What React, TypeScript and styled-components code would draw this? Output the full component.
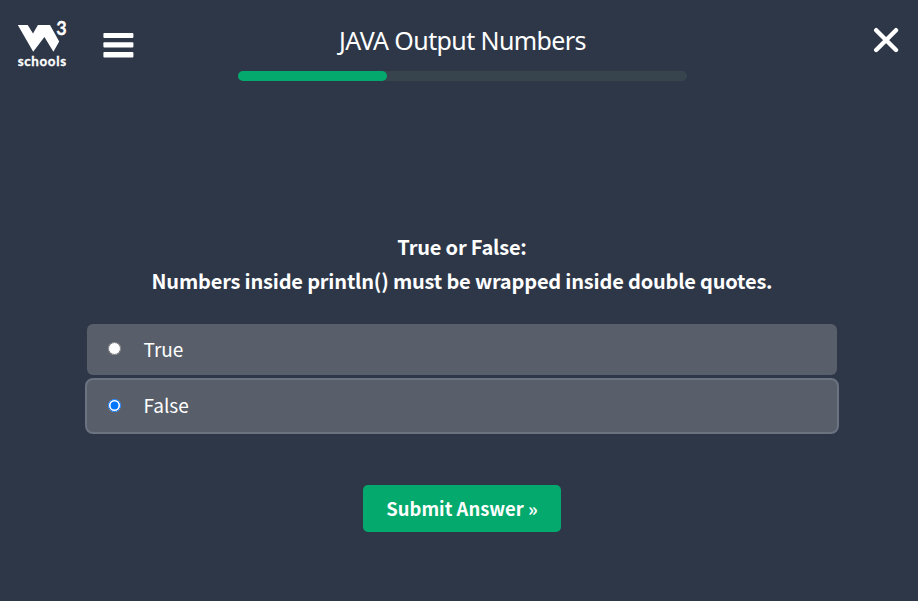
import React, { useState } from "react";
import styled, { createGlobalStyle } from "styled-components";

const GlobalStyle = createGlobalStyle`
  * { box-sizing: border-box; }
  body {
    margin: 0;
    background: #2d3748;
    color: #fff;
    font-family: "Noto Sans CJK SC", "Noto Sans", sans-serif;
  }
`;

const Page = styled.div`
  width: 918px;
  height: 601px;
  display: flex;
  flex-direction: column;
  overflow: hidden;
`;

const Header = styled.header`
  height: 90px;
  display: grid;
  grid-template-columns: 238px 449px 1fr;
`;

const Brand = styled.div`
  display: flex;
  align-items: flex-start;
  padding: 16px 0 0 14px;
`;

const Logo = styled.svg`
  display: block;
  width: 58px;
  height: 56px;
  fill: #fff;
  font-family: Lato, sans-serif;
  font-weight: 700;
`;

const MenuButton = styled.button`
  display: flex;
  margin: 17px 0 0 31px;
  padding: 0;
  border: 0;
  background: none;
`;

const Progress = styled.div`
  display: flex;
  flex-direction: column;
  align-items: center;
`;

const Title = styled.h1`
  margin: 0;
  padding-top: 22px;
  height: 71px;
  font: 400 25px/36px "Noto Sans", sans-serif;
  letter-spacing: -0.6px;
  white-space: nowrap;
`;

const Track = styled.div`
  width: 449px;
  height: 10px;
  border-radius: 5px;
  background: #38444d;
`;

const Fill = styled.div<{ $width: number }>`
  width: ${(p) => p.$width}px;
  height: 10px;
  border-radius: 5px;
  background: #04aa6d;
`;

const CloseButton = styled.button`
  justify-self: end;
  align-self: start;
  margin: 27px 19px 0 0;
  padding: 0;
  border: 0;
  background: none;
  display: flex;
`;

const Quiz = styled.form`
  width: 754px;
  margin: 140px 0 0 85px;
  display: flex;
  flex-direction: column;
  align-items: center;
`;

const Question = styled.p`
  margin: 0;
  height: 94px;
  text-align: center;
  white-space: nowrap;
  font-size: 20px;
  font-weight: 700;
  line-height: 34px;
  letter-spacing: -0.19px;
`;

const Option = styled.label<{ $selected: boolean }>`
  width: ${(p) => (p.$selected ? 754 : 750)}px;
  height: ${(p) => (p.$selected ? 56 : 51)}px;
  margin-bottom: 3px;
  padding-left: 21px;
  display: flex;
  align-items: center;
  border-radius: ${(p) => (p.$selected ? 8 : 6)}px;
  border: ${(p) => (p.$selected ? "2px solid #6b7280" : "0")};
  background: #585f6b;
  font-size: 19px;
  line-height: 28px;
`;

const Radio = styled.input`
  width: 13px;
  height: 13px;
  margin: 0 22.5px 2px 0;
`;

const OptionText = styled.span`
  padding-bottom: 2px;
`;

const Submit = styled.button`
  width: 198px;
  height: 47px;
  margin-top: 48px;
  padding: 0 0 2px;
  border: 0;
  border-radius: 5px;
  background: #04aa6d;
  color: #fff;
  font: 700 18.4px/28px "Noto Sans CJK SC", sans-serif;
  white-space: nowrap;
`;

const answers = ["True", "False"];

export default function App() {
  const [selected, setSelected] = useState("False");
  return (
    <Page>
      <GlobalStyle />
      <Header>
        <Brand>
          <Logo viewBox="0 0 58 56" aria-label="W3Schools">
            <path d="M3.8 9H13.7L19 17.4L23.9 9H36L45.2 25.5L39.4 35.7L30.4 21L19.2 35.7Z" />
            <text x="42.2" y="18.8" fontSize="18" stroke="#fff" strokeWidth=".3">3</text>
            <text x="3.7" y="50" fontSize="13.4" letterSpacing=".65" stroke="#fff" strokeWidth=".3">schools</text>
          </Logo>
          <MenuButton aria-label="Menu">
            <svg width="31" height="25" viewBox="0 0 31 25" fill="#fff">
              <rect x=".4" y="0" width="30" height="5" rx="1" />
              <rect x=".4" y="9.3" width="30" height="5.3" rx="1" />
              <rect x=".4" y="19" width="30" height="5.4" rx="1" />
            </svg>
          </MenuButton>
        </Brand>
        <Progress>
          <Title>JAVA Output Numbers</Title>
          <Track>
            <Fill $width={149} />
          </Track>
        </Progress>
        <CloseButton aria-label="Close">
          <svg width="26" height="26" viewBox="0 0 26 26" stroke="#fff" strokeWidth="4.4" strokeLinecap="round">
            <path d="M3.2 3.2L23 23M23 3.2L3.2 23" />
          </svg>
        </CloseButton>
      </Header>
      <Quiz onSubmit={(e: React.FormEvent) => e.preventDefault()}>
        <Question>
          True or False:
          <br />
          Numbers inside println() must be wrapped inside double quotes.
        </Question>
        {answers.map((a) => (
          <Option key={a} $selected={a === selected}>
            <Radio type="radio" name="answer" checked={a === selected} onChange={() => setSelected(a)} />
            <OptionText>{a}</OptionText>
          </Option>
        ))}
        <Submit>Submit Answer »</Submit>
      </Quiz>
    </Page>
  );
}
